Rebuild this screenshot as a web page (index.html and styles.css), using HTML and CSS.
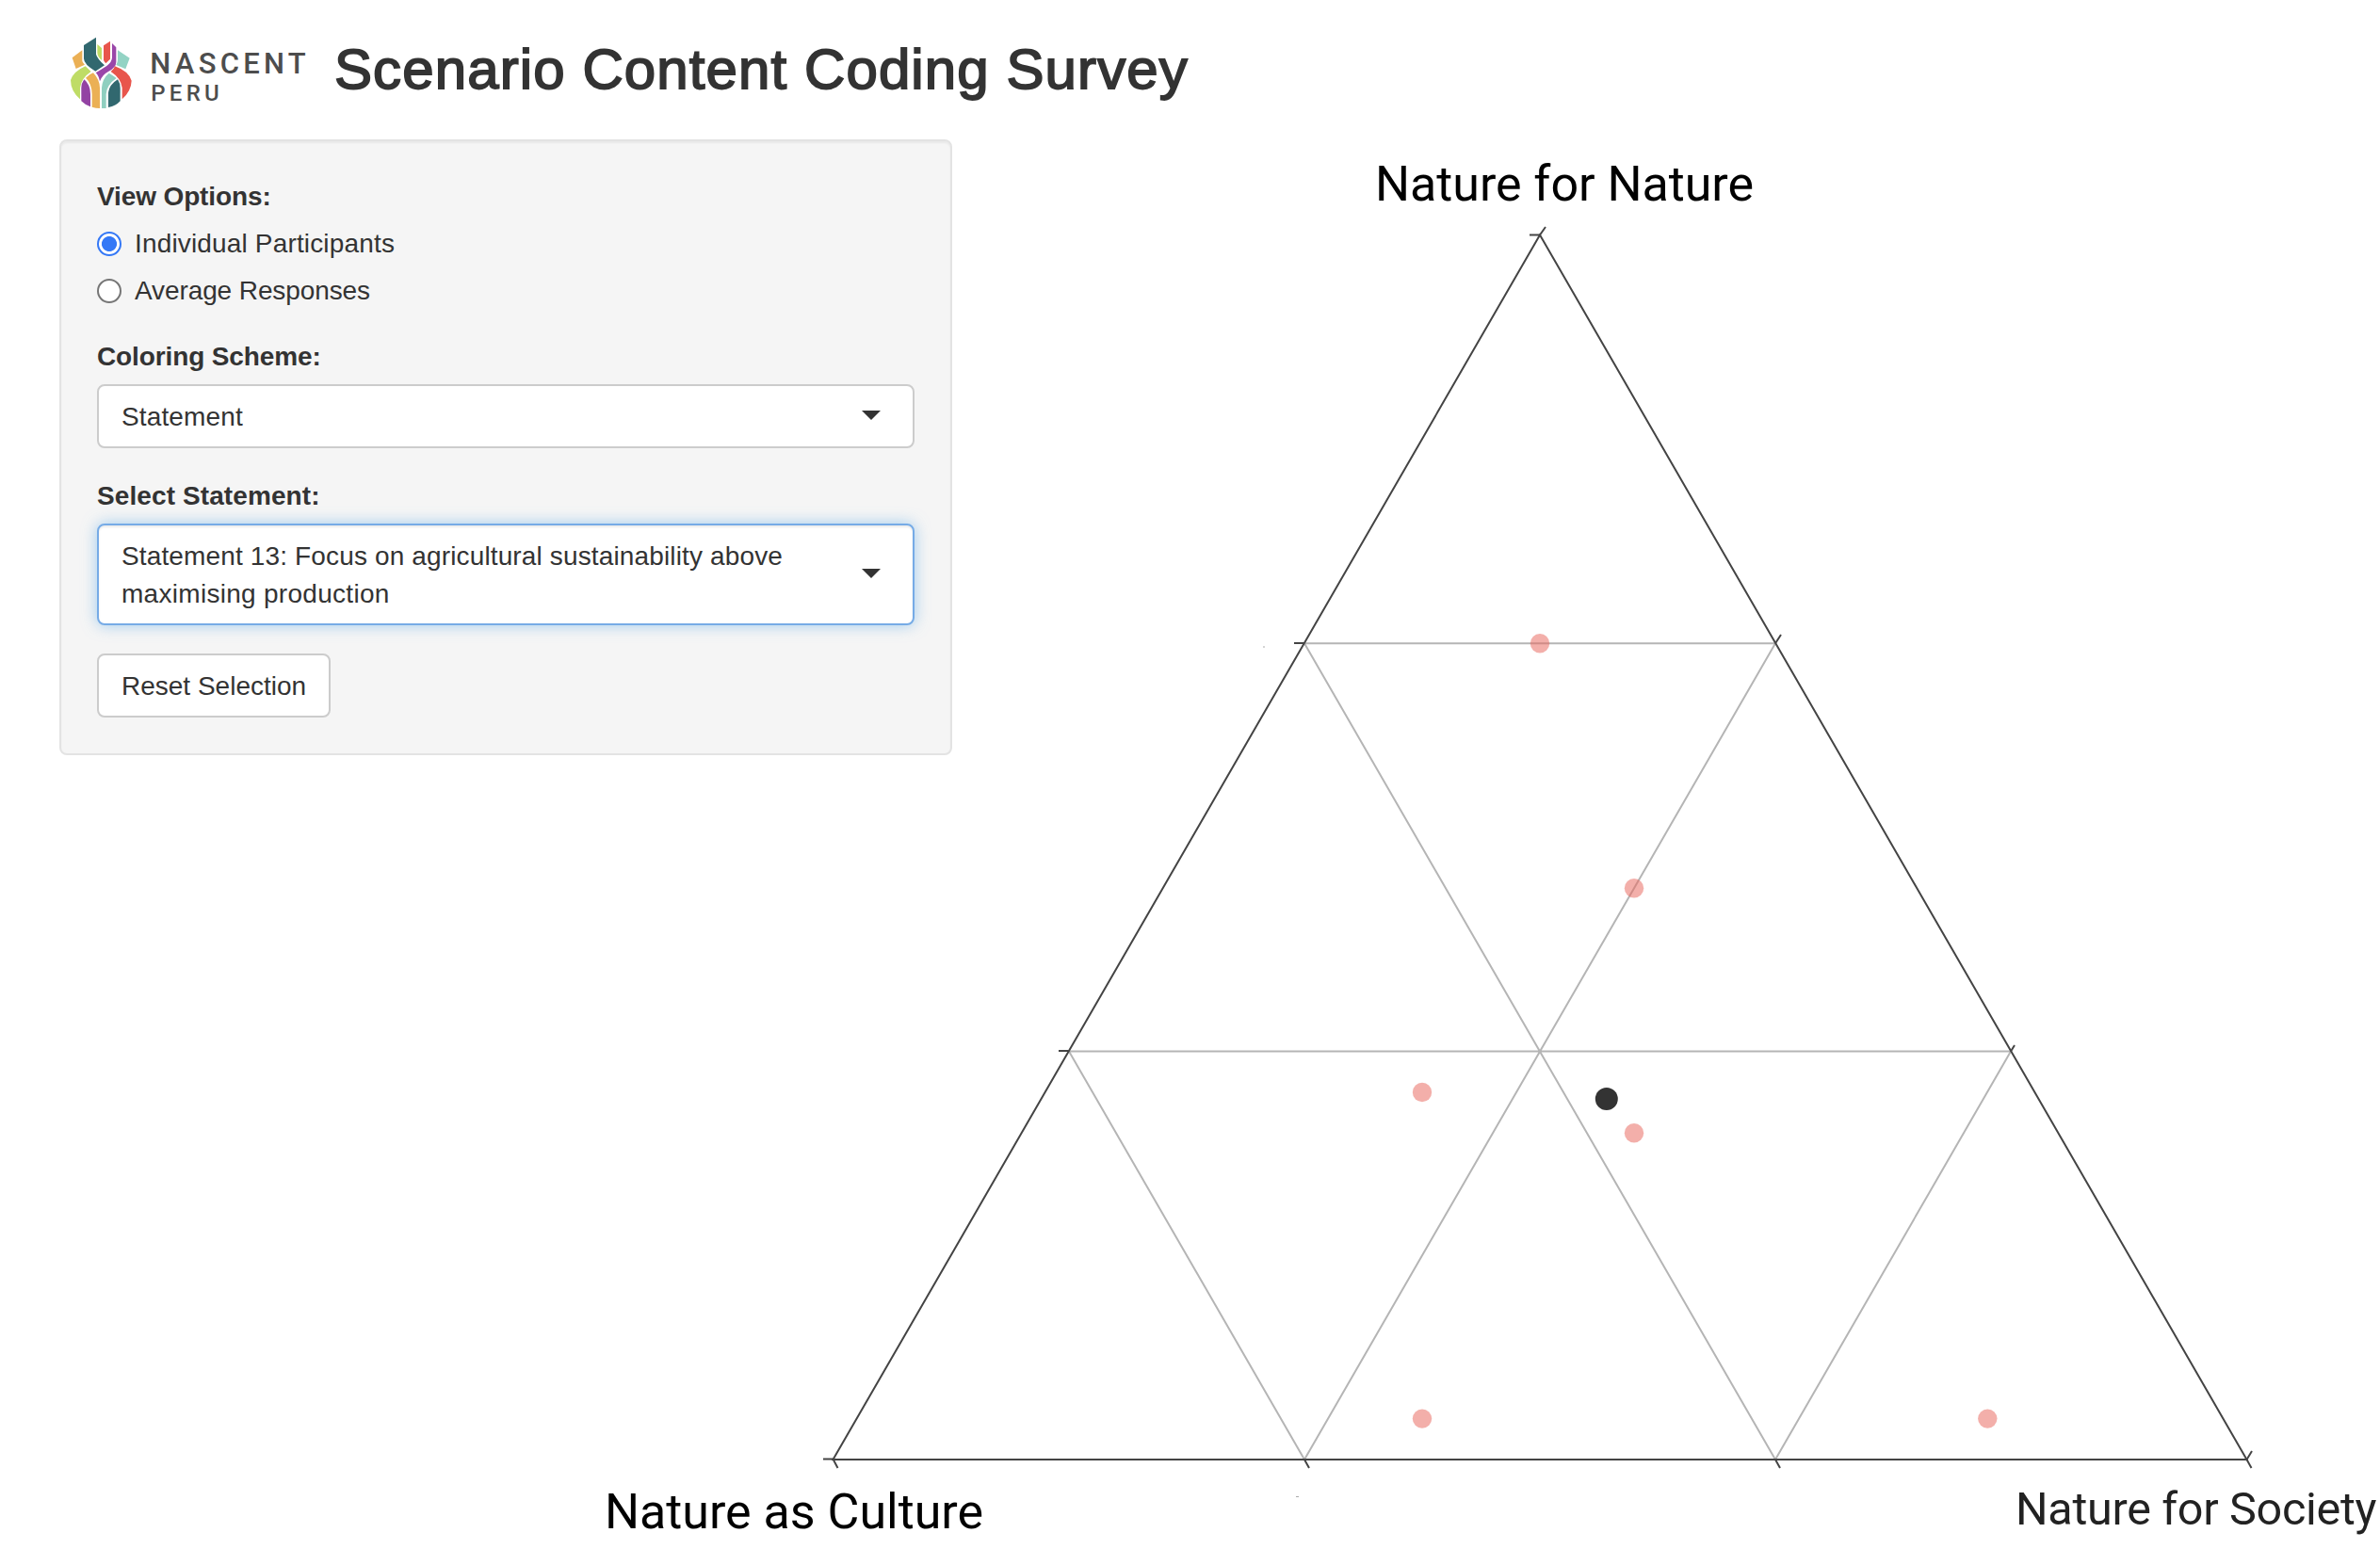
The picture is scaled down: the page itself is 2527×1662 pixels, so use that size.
FILE: index.html
```html
<!DOCTYPE html>
<html lang="en">
<head>
<meta charset="utf-8">
<title>Scenario Content Coding Survey</title>
<link rel="stylesheet" href="styles.css">
</head>
<body>
<header class="header">
  <svg class="logo" viewBox="0 0 870 330" role="img" aria-label="Nascent Peru">
    <path fill="#31686f" d="M87 69L126 44V98Q130 112 153 133L124 152Q87 130 87 112Z"/>
    <path fill="#bfdc66" d="M130 66L144 78V117Q130 105 130 92Z"/>
    <path fill="#e8554c" d="M150 70L171 56V113L157 127Q150 122 150 115Z"/>
    <path fill="#9a47a9" d="M177 63L190 76V122Q190 140 165 153Q145 164 138 184Q134 165 125 157Q140 148 160 135Q177 122 177 108Z"/>
    <path fill="#ebb055" d="M50 109L82 85V120Q86 128 90 131L62 144Z"/>
    <path fill="#93d3c4" d="M195 85L233 110L220 145L190 132Q195 125 195 115Z"/>
    <path fill="#bfdc66" d="M92 136L110 153Q78 175 75 205V241Q45 215 45 180Q55 152 92 136Z"/>
    <path fill="#9343a3" d="M88 178Q108 195 108 225V265Q92 260 79 247V205Q79 190 88 178Z"/>
    <path fill="#ebb055" d="M117 157Q138 180 138 205V270Q125 270 113 266V225Q112 190 93 173Q103 162 117 157Z"/>
    <path fill="#8fcfc0" d="M167 158Q180 165 191 174Q160 195 158 225V270H144V205Q146 175 167 158Z"/>
    <path fill="#31686f" d="M195 178Q203 190 203 205V247Q190 262 165 267V220Q168 195 195 178Z"/>
    <path fill="#e8554c" d="M186 136Q230 152 239 182Q238 215 209 241V205Q206 175 173 153Q183 146 186 136Z"/>
    <text class="logo-name" x="298" y="159" textLength="496">NASCENT</text>
    <text class="logo-country" x="301" y="246" textLength="217">PERU</text>
  </svg>
  <h1 class="title">Scenario Content Coding Survey</h1>
</header>
<main class="content">
  <form class="panel">
    <span class="label view-label">View Options:</span>
    <label class="option"><input class="radio" type="radio" name="view" checked><span class="opt-individual">Individual Participants</span></label>
    <label class="option"><input class="radio" type="radio" name="view"><span class="opt-average">Average Responses</span></label>
    <span class="label group-label">Coloring Scheme:</span>
    <div class="select"><span class="value">Statement</span><i class="caret"></i></div>
    <span class="label group-label label-statement">Select Statement:</span>
    <div class="select select-focus"><span class="value">Statement 13: Focus on agricultural sustainability above<br><span class="value-end">maximising production</span></span><i class="caret"></i></div>
    <button class="button" type="button">Reset Selection</button>
  </form>
  <svg class="chart" viewBox="640 148 1887 1514">
    <g class="grid-lines">
      <path d="M1385 683.3H1885M1135 1116.5H2135M1385 683.3L1885 1550M1885 683.3L1385 1550M1135 1116.5L1385 1550M2135 1116.5L1885 1550"/>
    </g>
    <path class="axis" d="M1635 249.5L884.5 1550H2385.5Z"/>
    <path class="ticks" d="M1624 249.5H1635L1641 241M1374 683H1385M1124 1116H1135M874 1549.5H884.5L889.5 1559M1385 1550L1390 1559M1885 1550L1890 1559M2385.5 1550L2390.5 1559M2385.5 1550L2391 1541M2135 1116.5L2139 1110M1885 683.3L1891 674"/>
    <g class="points">
      <circle cx="1635" cy="683.3" r="10.2"/>
      <circle cx="1735" cy="943.3" r="10.2"/>
      <circle cx="1510" cy="1160" r="10.2"/>
      <circle cx="1735" cy="1203.3" r="10.2"/>
      <circle cx="1510" cy="1506.6" r="10.2"/>
      <circle cx="2110.3" cy="1506.6" r="10.2"/>
    </g>
    <circle class="mean" cx="1705.8" cy="1167" r="12"/>
    <path class="specks" d="M1341 687h2M1376 1589.500h3"/>
    <text class="corner" x="1460" y="213" textLength="402">Nature for Nature</text>
    <text class="corner" x="642" y="1622.500" textLength="402">Nature as Culture</text>
    <text class="corner corner-society" x="2140" y="1619" textLength="383.500">Nature for Society</text>
  </svg>
</main>
</body>
</html>
```
FILE: styles.css
```css
* { box-sizing: border-box; }
body {
  margin: 0;
  height: 1662px;
  overflow: hidden;
  background: #fff;
  color: #333;
  font: 28px/40px "Liberation Sans", Arial, sans-serif;
}
.header { display: flex; height: 148px; padding: 25px 0 0 60px; }
.logo { width: 290px; height: 110px; flex: none; }
.logo-name, .logo-country { font-family: Roboto, sans-serif; font-weight: 500; fill: #4d4d4d; }
.logo-name { font-size: 93px; }
.logo-country { font-size: 72px; }
.title {
  margin: 16px 0 0 5px;
  font-size: 60px;
  line-height: 66px;
  font-weight: 400;
  letter-spacing: 1.1px;
  white-space: nowrap;
  -webkit-text-stroke: 1.8px #333;
}
.content { display: grid; grid-template-columns: 2527px; }
.panel {
  grid-area: 1 / 1;
  justify-self: start;
  align-self: start;
  display: flex;
  flex-direction: column;
  align-items: flex-start;
  width: 948px;
  height: 654px;
  margin-left: 63px;
  padding: 38px;
  background: #f5f5f5;
  border: 2px solid #e3e3e3;
  border-radius: 8px;
  box-shadow: inset 0 2px 2px rgba(0, 0, 0, .05);
}
.label { height: 40px; padding-top: 1px; font-weight: 700; margin-bottom: 10px; letter-spacing: -.12px; }
.label-statement { letter-spacing: .1px; }
.option { display: flex; align-items: center; gap: 14px; height: 40px; margin-bottom: 10px; }
.option span { padding-top: 2px; }
.opt-individual { letter-spacing: .16px; }
.opt-average { letter-spacing: -.1px; }
.radio {
  appearance: none;
  width: 26px;
  height: 26px;
  margin: 2px 0 0;
  border: 2px solid #767676;
  border-radius: 50%;
  background: #fff;
}
.radio:checked {
  border-color: #3478f6;
  background: radial-gradient(circle, #3478f6 7.6px, #fff 8.4px);
}
.group-label { margin-top: 30px; }
.option + .group-label { margin-top: 20px; }
.select {
  display: flex;
  align-items: center;
  justify-content: space-between;
  width: 868px;
  padding: 12px 34px 12px 24px;
  background: #fff;
  border: 2px solid #ccc;
  border-radius: 8px;
  white-space: nowrap;
}
.value { padding-top: 1px; margin-bottom: -1px; letter-spacing: .14px; }
.value-end { letter-spacing: .29px; }
.select-focus {
  border-color: #76abe6;
  box-shadow: inset 0 2px 2px rgba(0, 0, 0, .075), 0 0 16px rgba(102, 175, 233, .6);
}
.caret {
  border: 10px solid transparent;
  border-top-color: #333;
  border-bottom: 0;
  margin-bottom: 2px;
}
.button {
  width: 248px;
  height: 68px;
  margin-top: 30px;
  padding: 2px 0 0 24px;
  font: inherit;
  color: inherit;
  text-align: left;
  white-space: nowrap;
  background: #fff;
  border: 2px solid #ccc;
  border-radius: 8px;
}
.chart { grid-area: 1 / 1; justify-self: end; width: 1887px; height: 1514px; pointer-events: none; }
.grid-lines { fill: none; stroke: #b5b5b5; stroke-width: 2; }
.axis, .ticks { fill: none; stroke: #444; stroke-width: 2; }
.points { fill: #e8685f; fill-opacity: .53; }
.mean { fill: #333; }
.specks { stroke: #aaa; stroke-width: 1; }
.corner { font: 52px Roboto, sans-serif; fill: #000; }
.corner-society { font-size: 48.5px; fill: #222; }
```
